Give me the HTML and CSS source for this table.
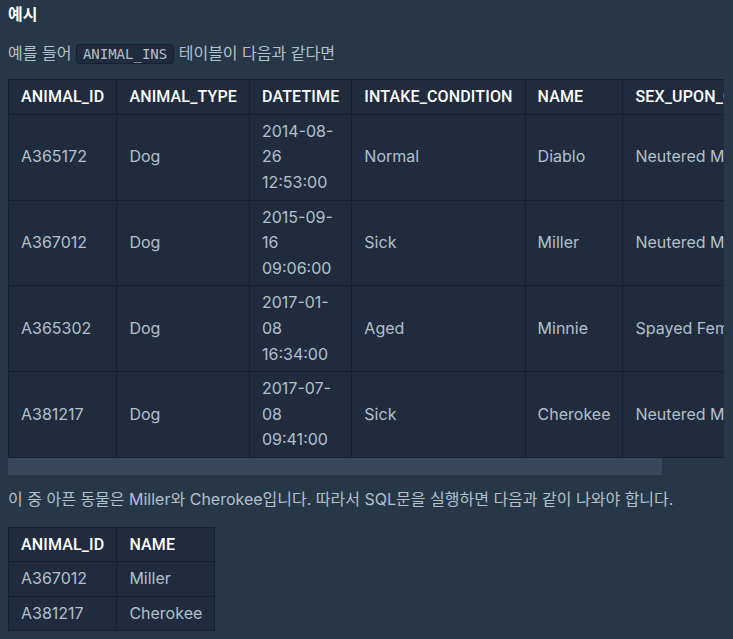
FILE: index.html
```html
<!DOCTYPE html>
<html lang="ko">
<head>
<meta charset="utf-8">
<link rel="stylesheet" href="styles.css">
</head>
<body>
<div class="content">
  <h5 class="title">예시</h5>
  <p class="para">예를 들어 <code class="code">ANIMAL_INS</code> 테이블이 다음과 같다면</p>
  <div class="scroll-wrap">
    <div class="scroll">
      <table class="tbl">
        <thead>
          <tr><th>ANIMAL_ID</th><th>ANIMAL_TYPE</th><th>DATETIME</th><th>INTAKE_CONDITION</th><th>NAME</th><th>SEX_UPON_OUTCOME</th></tr>
        </thead>
        <tbody>
          <tr><td>A365172</td><td>Dog</td><td>2014-08-26 12:53:00</td><td>Normal</td><td>Diablo</td><td>Neutered Male</td></tr>
          <tr><td>A367012</td><td>Dog</td><td>2015-09-16 09:06:00</td><td>Sick</td><td>Miller</td><td>Neutered Male</td></tr>
          <tr><td>A365302</td><td>Dog</td><td>2017-01-08 16:34:00</td><td>Aged</td><td>Minnie</td><td>Spayed Female</td></tr>
          <tr><td>A381217</td><td>Dog</td><td>2017-07-08 09:41:00</td><td>Sick</td><td>Cherokee</td><td>Neutered Male</td></tr>
        </tbody>
      </table>
    </div>
    <div class="scrollbar"><div class="thumb"></div></div>
  </div>
  <p class="para second">이 중 아픈 동물은 Miller와 Cherokee입니다. 따라서 SQL문을 실행하면 다음과 같이 나와야 합니다.</p>
  <table class="tbl small">
    <thead>
      <tr><th>ANIMAL_ID</th><th>NAME</th></tr>
    </thead>
    <tbody>
      <tr><td>A367012</td><td>Miller</td></tr>
      <tr><td>A381217</td><td>Cherokee</td></tr>
    </tbody>
  </table>
</div>
</body>
</html>
```

FILE: styles.css
```css
html, body {
  margin: 0;
  padding: 0;
  background: #263747;
}
body {
  font-family: Inter, "Noto Sans CJK KR", sans-serif;
  font-size: 16px;
  line-height: 1.6;
  color: #b2c0cc;
}
.content {
  padding: 2px 8px 0 8px;
}
.title {
  margin: 0;
  font-size: 16px;
  font-weight: 700;
  color: #ffffff;
  line-height: 25.6px;
}
.para {
  margin: 13px 0 12px 0;
  line-height: 25.6px;
}
.para.second {
  margin: 12px 0 14px 0;
}
.code {
  font-family: "DejaVu Sans Mono", monospace;
  font-size: 14px;
  background: #202b3d;
  border: 1px solid #172030;
  border-radius: 4px;
  padding: 1px 6px;
  color: #b2c0cc;
}
.scroll-wrap {
  width: 716px;
}
.scroll {
  width: 716px;
  overflow: hidden;
}
.scrollbar {
  height: 17px;
  width: 716px;
}
.thumb {
  width: 654px;
  height: 17px;
  background: #37475c;
}
.tbl {
  border-collapse: collapse;
  background: #202b3d;
}
.tbl th, .tbl td {
  border: 1px solid #172030;
  padding: 4px 12px;
  text-align: left;
  line-height: 25.6px;
}
.tbl th {
  font-family: Roboto, "Noto Sans CJK KR", sans-serif;
  color: #ffffff;
  font-weight: 500;
  letter-spacing: 0.15px;
}
.tbl td {
  color: #b2c0cc;
}
```
